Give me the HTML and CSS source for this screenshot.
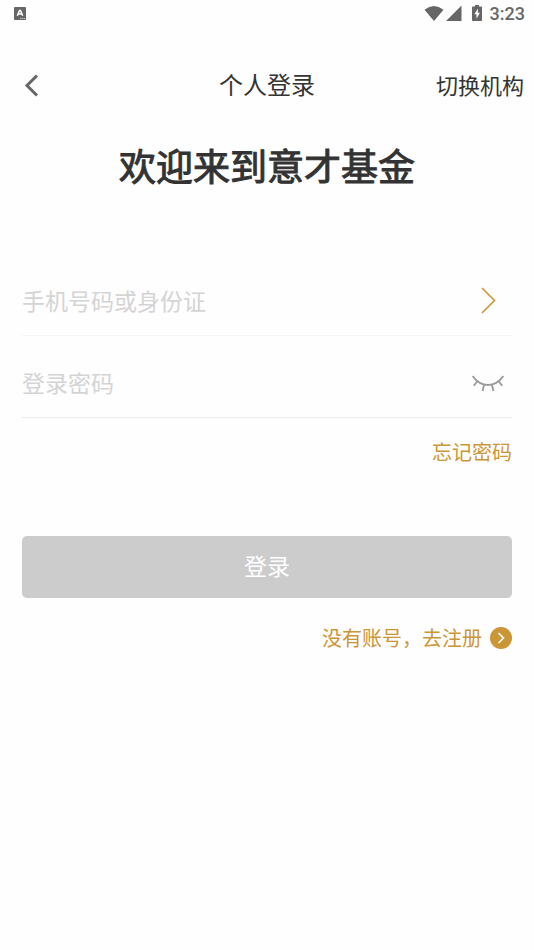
FILE: index.html
```
<!DOCTYPE html>
<html lang="zh-CN">
<head>
<meta charset="utf-8">
<meta name="viewport" content="width=device-width, initial-scale=1">
<title>个人登录</title>
<link rel="stylesheet" href="styles.css">
</head>
<body>
<div class="status">
  <svg class="status-app" width="12" height="14" viewBox="0 0 12 14" aria-hidden="true">
    <rect width="12" height="13" rx="1" fill="#666"/>
    <path d="M3.300 8.800 5.500 3.500h1l2.200 5.300M4.200 7.100h3.600" fill="none" stroke="#fff" stroke-width="1.500"/>
    <path d="M6 11.500h5" stroke="#ddd" stroke-width="0.800" stroke-dasharray="1.500 0.500"/>
  </svg>
  <div class="status-right">
    <svg width="38" height="18" viewBox="0 0 38 18" fill="#666" aria-hidden="true">
      <path d="M-1.500 4.700Q8 -2.700 17.500 4.700L8 16ZM35.500 0.500V16H20Z"/>
    </svg>
    <svg width="10" height="18" viewBox="0 0 10 18" aria-hidden="true">
      <path d="M3 0h4v1.500h2q1 0 1 1V15q0 1-1 1H1q-1 0-1-1V2.500q0-1 1-1h2Z" fill="#666"/>
      <path d="M6 3.500 2.400 9.300h2.100V13.700L7.900 7.700H5.800Z" fill="#fff"/>
    </svg>
    <time class="clock">3:23</time>
  </div>
</div>
<header class="bar">
  <button class="back" type="button" aria-label="返回">
    <svg width="18" height="28" viewBox="0 0 18 28" aria-hidden="true"><path d="M15 5.500 5 15.500l10 10" fill="none" stroke="#666" stroke-width="3"/></svg>
  </button>
  <h1 class="title">个人登录</h1>
  <a class="switch" href="#">切换机构</a>
</header>
<main class="content">
  <h2 class="welcome">欢迎来到意才基金</h2>
  <form class="form">
    <div class="field">
      <input type="text" placeholder="手机号码或身份证" aria-label="手机号码或身份证">
      <button class="icon-button" type="button" aria-label="选择账号">
        <svg width="32" height="28" viewBox="0 0 32 28" aria-hidden="true"><path d="M10 2 22.500 14.500 10 27" fill="none" stroke="#cc9636" stroke-width="1.600"/></svg>
      </button>
    </div>
    <div class="field field-password">
      <input type="password" placeholder="登录密码" aria-label="登录密码">
      <button class="icon-button" type="button" aria-label="显示密码">
        <svg width="32" height="28" viewBox="0 0 32 28" aria-hidden="true"><path d="M0.700 8C4.500 13.500 10 17 16 17s11.500-3.500 15.300-9M5.500 13 1.800 17.800M12 17l-1.500 6M20 17l1.500 6M26.500 13l3.700 4.800" fill="none" stroke="#999" stroke-width="1.800"/></svg>
      </button>
    </div>
    <a class="forgot" href="#">忘记密码</a>
    <button class="submit" type="submit">登录</button>
    <a class="register" href="#">没有账号，去注册
      <svg width="22" height="22" viewBox="0 0 22 22" aria-hidden="true"><circle cx="11" cy="11" r="11" fill="#cc9636"/><path d="m8.500 6 5 5-5 5" fill="none" stroke="#fff" stroke-width="1.700"/></svg>
    </a>
  </form>
</main>
</body>
</html>
```
FILE: styles.css
```
* {
  box-sizing: border-box;
}

body {
  margin: 0;
  background: #fefefe;
  color: #333;
  font-family: "Noto Sans CJK SC", sans-serif;
}

a {
  color: inherit;
  text-decoration: none;
}

button {
  padding: 0;
  border: 0;
  background: none;
  font: inherit;
}

svg {
  display: block;
  flex: none;
  overflow: visible;
}

.status {
  display: flex;
  align-items: center;
  justify-content: space-between;
  height: 28px;
  padding: 0 9px 0 14px;
}

.status-right {
  display: flex;
  align-items: center;
  gap: 8px;
}

.clock {
  color: #666;
  font: 500 18px/28px Roboto, sans-serif;
}

.bar {
  display: grid;
  grid-template-columns: 1fr auto 1fr;
  align-items: center;
  height: 112px;
  padding: 0 10px;
}

.back {
  justify-self: start;
  padding-left: 12px;
}

.title {
  margin: 0;
  font-size: 24px;
  font-weight: 400;
  line-height: 36px;
}

.switch {
  justify-self: end;
  font-size: 22px;
  line-height: 34px;
}

.content {
  padding: 0 22px;
}

.welcome {
  margin: 0;
  font-size: 37px;
  font-weight: 400;
  line-height: 50px;
  text-align: center;
  -webkit-text-stroke: 1px #333;
}

.form {
  display: flex;
  flex-direction: column;
  margin-top: 78px;
}

.field {
  display: flex;
  align-items: center;
  height: 68px;
  padding-bottom: 4px;
  border-bottom: 1px solid #f5f5f5;
}

.field-password {
  margin-top: 14px;
  border-color: #ebebeb;
}

.field input {
  flex: 1;
  min-width: 0;
  height: 40px;
  padding: 0;
  border: 0;
  outline: 0;
  background: none;
  color: #333;
  font: 23px/40px "Noto Sans CJK SC", sans-serif;
}

.field input::placeholder {
  color: #d4d4d4;
}

.icon-button {
  margin-right: 8px;
}

.forgot {
  align-self: flex-end;
  margin-top: 18px;
  color: #cc9636;
  font-size: 20px;
  line-height: 32px;
}

.submit {
  height: 62px;
  margin-top: 68px;
  padding-bottom: 4px;
  border-radius: 5px;
  background: #ccc;
  color: #fff;
  font-size: 23px;
}

.register {
  display: flex;
  align-items: center;
  align-self: flex-end;
  gap: 8px;
  margin-top: 24px;
  color: #cc9636;
  font-size: 20px;
  line-height: 32px;
}
```
